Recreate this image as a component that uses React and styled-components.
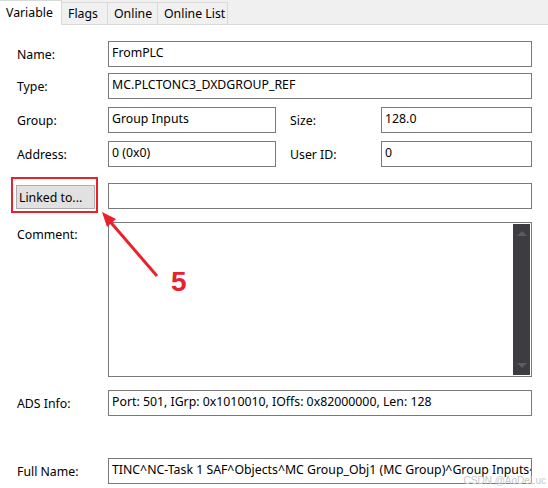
import styled, { createGlobalStyle } from "styled-components";

const GlobalStyle = createGlobalStyle`
  body {
    margin: 0;
    background: #ffffff;
    font-family: "Noto Sans", "Open Sans", sans-serif;
    font-size: 12.3px;
    color: #000000;
  }
`;

// Tab captions with their widths in the original dialog
const tabs = [
  { name: "Variable", width: 62 },
  { name: "Flags", width: 47 },
  { name: "Online", width: 51 },
  { name: "Online List", width: 71 },
];

// Variable page of the TwinCAT properties window
const App = () => {
  return (
    <Window>
      <GlobalStyle />
      <TabBar>
        {tabs.map((tab, index) => (
          <Tab key={tab.name} active={index === 0} width={tab.width}>
            {tab.name}
          </Tab>
        ))}
        <TabFill />
      </TabBar>

      <Page>
        <Row top={16}>
          <Label>Name:</Label>
          <Field>FromPLC</Field>
        </Row>
        <Row top={6}>
          <Label>Type:</Label>
          <Field>MC.PLCTONC3_DXDGROUP_REF</Field>
        </Row>
        <Row top={8}>
          <Label>Group:</Label>
          <Field width={168}>Group Inputs</Field>
          <SideLabel>Size:</SideLabel>
          <Field>128.0</Field>
        </Row>
        <Row top={8}>
          <Label>Address:</Label>
          <Field width={168}>0 (0x0)</Field>
          <SideLabel>User ID:</SideLabel>
          <Field>0</Field>
        </Row>
        <Row top={16}>
          <ButtonCell>
            <LinkButton>Linked to...</LinkButton>
            <Highlight />
          </ButtonCell>
          <Field />
        </Row>
        <Row top={13}>
          <Label top>Comment:</Label>
          <CommentBox>
            <ScrollBar>
              <ScrollArrow up />
              <ScrollArrow />
            </ScrollBar>
          </CommentBox>
        </Row>
        <Row top={13}>
          <Label>ADS Info:</Label>
          <Field>Port: 501, IGrp: 0x1010010, IOffs: 0x82000000, Len: 128</Field>
        </Row>
        <Row top={42}>
          <Label>Full Name:</Label>
          <Field>
            TINC^NC-Task 1 SAF^Objects^MC Group_Obj1 (MC Group)^Group Inputs^FromPLC
          </Field>
        </Row>

        {/* annotation: arrow pointing at the Linked to... button */}
        <Pointer width="70" height="70" viewBox="0 0 70 70">
          <line x1="7" y1="7" x2="57" y2="65" stroke="#e8222b" strokeWidth="3" />
          <polygon points="2,1 7,16 16,8" fill="#e8222b" />
        </Pointer>
        <StepNumber>5</StepNumber>
      </Page>

      <Watermark>CSDN @AoDeLuc</Watermark>
    </Window>
  );
};

const Window = styled.div`
  position: relative;
  width: 548px;
  height: 488px;
  overflow: hidden;
  background: #ffffff;
`;

const TabBar = styled.div`
  display: flex;
  align-items: flex-end;
  height: 25px;
  background: #f0f0f0;
`;

const Tab = styled.div`
  width: ${({ width }) => width}px;
  height: ${({ active }) => (active ? "25px" : "23px")};
  box-sizing: border-box;
  flex: none;
  display: flex;
  align-items: center;
  padding: 0 0 ${({ active }) => (active ? "2px" : "0")} 6px;
  margin-left: ${({ active }) => (active ? "0" : "-1px")};
  background: ${({ active }) => (active ? "#ffffff" : "#f0f0f0")};
  border: 1px solid #d9d9d9;
  border-left: ${({ active }) => (active ? "none" : "1px solid #d9d9d9")};
  border-bottom: ${({ active }) => (active ? "none" : "1px solid #d9d9d9")};
  white-space: nowrap;
`;

const TabFill = styled.div`
  flex: 1;
  height: 1px;
  background: #d9d9d9;
`;

const Page = styled.div`
  position: relative;
  display: flex;
  flex-direction: column;
  padding: 0 16px;
`;

const Row = styled.div`
  display: flex;
  margin-top: ${({ top }) => top}px;
`;

const Label = styled.div`
  width: 92px;
  flex: none;
  padding-top: ${({ top }) => (top ? "5px" : "6px")};
  padding-left: 1px;
  box-sizing: border-box;
  line-height: 16px;
`;

const SideLabel = styled.div`
  width: 105px;
  flex: none;
  padding: 6px 0 0 14px;
  box-sizing: border-box;
  line-height: 16px;
`;

const Field = styled.div`
  ${({ width }) => (width ? `width: ${width}px; flex: none;` : "flex: 1;")}
  min-width: 0;
  height: 26px;
  box-sizing: border-box;
  border: 1px solid #7a7a7a;
  padding: 3px 3px 0 3px;
  line-height: 16px;
  white-space: nowrap;
  overflow: hidden;
`;

const ButtonCell = styled.div`
  position: relative;
  width: 92px;
  flex: none;
  display: flex;
  align-items: center;
`;

const LinkButton = styled.div`
  width: 79px;
  height: 24px;
  margin-top: 2px;
  box-sizing: border-box;
  display: flex;
  align-items: center;
  padding-left: 2px;
  background: #e1e1e1;
  border: 1px solid #adadad;
`;

const Highlight = styled.div`
  position: absolute;
  left: -5px;
  top: -6px;
  width: 87px;
  height: 36px;
  box-sizing: border-box;
  border: 2px solid #e8222b;
`;

const CommentBox = styled.div`
  flex: 1;
  height: 155px;
  box-sizing: border-box;
  border: 1px solid #7a7a7a;
  display: flex;
  justify-content: flex-end;
  padding: 1px;
`;

const ScrollBar = styled.div`
  width: 17px;
  background: #3d3c41;
  display: flex;
  flex-direction: column;
  justify-content: space-between;
  align-items: center;
  padding: 7px 0;
`;

const ScrollArrow = styled.div`
  width: 0;
  height: 0;
  border-left: 5px solid transparent;
  border-right: 5px solid transparent;
  ${({ up }) =>
    up ? "border-bottom: 5px solid #5c5b60;" : "border-top: 5px solid #5c5b60;"}
`;

const Pointer = styled.svg`
  position: absolute;
  left: 100px;
  top: 186px;
`;

const StepNumber = styled.div`
  position: absolute;
  left: 171px;
  top: 241px;
  font-family: "Liberation Sans", Arial, sans-serif;
  font-weight: 700;
  font-size: 28px;
  color: #e8222b;
`;

const Watermark = styled.div`
  position: absolute;
  right: 2px;
  bottom: 2px;
  font-family: "Liberation Sans", Arial, sans-serif;
  font-size: 10px;
  color: #c9c9c9;
`;

export default App;
